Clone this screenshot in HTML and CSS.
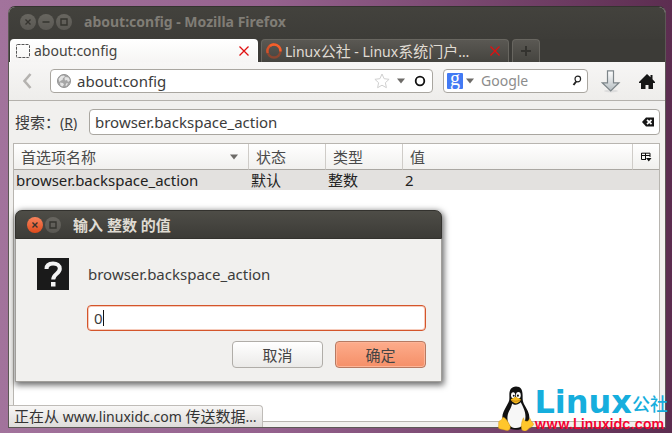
FILE: index.html
```html
<!DOCTYPE html>
<html lang="zh-CN">
<head>
<meta charset="utf-8">
<title>about:config - Mozilla Firefox</title>
<link rel="stylesheet" href="styles.css">
</head>
<body>
<div class="window">
  <header class="titlebar">
    <button class="orb" aria-label="关闭"><svg viewBox="0 0 16 16"><path d="M5.5 5.5l5 5M10.5 5.5l-5 5"/></svg></button>
    <button class="orb" aria-label="最小化"><svg viewBox="0 0 16 16"><path d="M4.5 8h7"/></svg></button>
    <button class="orb" aria-label="最大化"><svg viewBox="0 0 16 16"><path d="M5 5h6v6H5z"/></svg></button>
    <h1 class="title">about:config - Mozilla Firefox</h1>
  </header>
  <nav class="tabs">
    <div class="tab active">
      <svg class="favicon" viewBox="0 0 16 16"><rect x="1.5" y="1.5" width="13" height="13" rx="1" fill="none" stroke="#555" stroke-dasharray="3 1"/></svg>
      <span class="tab-label">about:config</span>
      <button class="close" aria-label="关闭标签页"><svg viewBox="0 0 12 12"><path d="M1.500 1.500l9 9M10.500 1.500l-9 9"/></svg></button>
    </div>
    <div class="tab">
      <svg class="favicon" viewBox="0 0 16 16" fill="none" stroke-width="2.400"><circle cx="8" cy="8" r="6.500" stroke="#8a4630"/><path d="M1.700 10A6.500 6.500 0 0 1 8 1.500" stroke="#d4532b"/><path d="M4 2.900A6.500 6.500 0 0 1 14.500 8.500" stroke="#f4602c"/></svg>
      <span class="tab-label">Linux<span class="cjk">公社</span> - Linux<span class="cjk">系统门户</span>…</span>
      <button class="close" aria-label="关闭标签页"><svg viewBox="0 0 12 12"><path d="M1.500 1.500l9 9M10.500 1.500l-9 9"/></svg></button>
    </div>
    <button class="tab new-tab" aria-label="新标签页"><svg viewBox="0 0 12 12"><path d="M6 1v10M1 6h10"/></svg></button>
  </nav>
  <div class="toolbar">
    <button class="back" aria-label="后退"><svg viewBox="0 0 10 16"><path d="M8.500 1L2.500 8l6 7" fill="none" stroke="#b5b3b0" stroke-width="2.600"/></svg></button>
    <div class="field address">
      <svg class="globe" viewBox="0 0 14 14"><circle cx="7" cy="7" r="6.500" fill="#a6a6a6" stroke="#929292"/><path d="M1.500 5L4 2l3-.5 1 1.500-2 1-.5 2L4 6.500 2.500 8zM8.500 3l3 .5 1.500 3-2 1.500-1-2-2 .5-.5-2zM3 8.500l3 .5 1 1.500-1.500 2-2-1zM9 9.500l2-.5-1 2.500-1.500.5z" fill="#e4e4e4"/></svg>
      <input class="text" aria-label="地址" value="about:config">
      <svg class="star" viewBox="0 0 16 16"><path d="M8 1l2.100 4.700 5 .6-3.700 3.400 1 5L8 12.200 3.600 14.700l1-5L.9 6.300l5-.6z" fill="#fff" stroke="#cfcfcf"/></svg>
      <svg class="drop" viewBox="0 0 8 6"><path d="M0 .500h8L4 5.500z"/></svg>
      <svg class="ring" viewBox="0 0 12 12"><circle cx="6" cy="6" r="4.300" fill="none" stroke="#111" stroke-width="1.800"/></svg>
    </div>
    <div class="field search">
      <span class="engine">g</span>
      <svg class="drop" viewBox="0 0 8 6"><path d="M0 .500h8L4 5.500z"/></svg>
      <input class="text" aria-label="搜索网页" placeholder="Google">
      <svg class="lens" viewBox="0 0 10 12"><circle cx="5.800" cy="4" r="2.800" fill="none" stroke="#222" stroke-width="1.200"/><path d="M4.200 6.500L1.500 10" stroke="#222" stroke-width="2"/></svg>
    </div>
    <button class="download" aria-label="下载"><svg viewBox="0 0 20 23"><defs><linearGradient id="steel" x2="0" y2="1"><stop stop-color="#fff"/><stop offset="1" stop-color="#b5bdc1"/></linearGradient></defs><ellipse cx="10" cy="21" rx="7" ry="1.500" fill="#ddd"/><path d="M6.500.8h6v12h5.500L9.700 21 1.200 12.800h5.300z" fill="url(#steel)" stroke="#7d8589" stroke-width="1.200"/></svg></button>
    <button class="home" aria-label="主页"><svg viewBox="0 0 16 15"><path d="M8 0l3.500 3.200V1h2v4.200L16 8v1h-2v6h-4.500v-4h-3v4H2V9H0V8z" fill="#161616"/></svg></button>
  </div>
  <main class="config">
    <div class="filter">
      <label for="filter"><span class="cjk">搜索：</span>(<u>R</u>)</label>
      <div class="field filter-box">
        <input class="text" id="filter" value="browser.backspace_action">
        <svg class="clear" viewBox="0 0 12 10"><path d="M0 5l4-4.500h8v9H4z" fill="#161616"/><path d="M5 2.800l4.500 4.400M9.500 2.800L5 7.200" stroke="#fff" stroke-width="1.700"/></svg>
      </div>
    </div>
    <div class="list">
      <table>
        <colgroup><col class="c-name"><col class="c-state"><col class="c-type"><col><col class="c-pick"></colgroup>
        <thead><tr>
          <th><div class="sort">首选项名称<svg class="drop" viewBox="0 0 8 6"><path d="M0 .500h8L4 5.500z"/></svg></div></th>
          <th>状态</th><th>类型</th><th>值</th>
          <th class="pick"><svg viewBox="0 0 11 10"><path d="M.5 1v6.500H5M.5 1.200H9V5M.5 3.500H9M4.500 1v6.500" fill="none" stroke="#111"/><path d="M5 6h5.500L7.800 9.500z" fill="#111"/></svg></th>
        </tr></thead>
        <tbody><tr><td>browser.backspace_action</td><td>默认</td><td>整数</td><td>2</td><td></td></tr></tbody>
      </table>
    </div>
  </main>
  <div class="status"><span class="cjk">正在从</span> www.linuxidc.com <span class="cjk">传送数据</span>…</div>
</div>

<section class="dialog" role="dialog" aria-labelledby="dialog-title">
  <header class="dialog-bar">
    <button class="orb hot" aria-label="关闭"><svg viewBox="0 0 16 16"><path d="M5.500 5.500l5 5M10.500 5.500l-5 5"/></svg></button>
    <button class="orb" aria-label="最大化"><svg viewBox="0 0 16 16"><path d="M5 5h6v6H5z"/></svg></button>
    <h2 class="title" id="dialog-title">输入 整数 的值</h2>
  </header>
  <div class="dialog-body">
    <svg class="question" viewBox="0 0 32 32"><path d="M0 0h32v32H0z" fill="#1a1a1a"/><path d="M9.500 11C9.500 7 12.500 5.500 16 5.500c4 0 6.800 1.800 6.800 5.300 0 5-6.600 5-6.600 10.700" fill="none" stroke="#f3f3f3" stroke-width="4"/><path d="M14 24h4.500v4.500H14z" fill="#f3f3f3"/></svg>
    <label class="prompt" for="value">browser.backspace_action</label>
    <div class="value-box"><input class="text" id="value" value="0"><i class="caret"></i></div>
    <div class="actions"><button class="btn">取消</button><button class="btn primary">确定</button></div>
  </div>
</section>

<aside class="brand">
  <svg class="tux" viewBox="0 0 38 44" preserveAspectRatio="none">
    <path d="M19 .5c-5 0-7 3.500-7 8 0 5 .5 6-3 11-3 5-5.500 9-4 14l5 7c5 3 13 3 18 0l5-7c1-6-2-10-5-15-2-3.500-2-5-2-9 0-6-2-9-7-9z" fill="#111"/>
    <path d="M15 17c2 2 6 2 9-1 2 4 5 8 5 14 0 7-4 11-10 11S9.500 37 10 30c.3-5 4-8 5-13z" fill="#f7f7f7"/>
    <ellipse cx="16" cy="9" rx="2.200" ry="3" fill="#fff"/><ellipse cx="21.500" cy="9" rx="2.500" ry="3.200" fill="#fff"/>
    <circle cx="16.600" cy="9.500" r="1" fill="#111"/><circle cx="21" cy="9.500" r="1.100" fill="#111"/>
    <path d="M13.500 13l5-2.500 5.500 2.500c0 2-3 4-5 4s-5-2-5.500-4z" fill="#f4b91e"/>
    <path d="M13.800 13.800c3 1.500 6 1.500 9.500 0" fill="none" stroke="#b9780c" stroke-width=".7"/>
    <path d="M5 30.500c3 0 6 5 8 9 0 4-3 4.500-6 3.500-3-1-7-.8-6.500-2.500.5-1.500 0-3.500.3-5.500.5-1.500 3-.5 4.200-4.500zM27 31c0 2 1.500 4 4 3.500 1.500-.3 2.500-3.500 3-2.500.5 3 3.500 3.800 3.500 5.500 0 2-4 3-6 5s-5.500 2-6.500-.5 0-8 2-11z" fill="#ffc62b" stroke="#d69a13" stroke-width=".5"/>
  </svg>
  <div class="brand-text">
    <div class="brand-name"><span class="big">Linux</span><span class="small">公社</span></div>
    <div class="brand-url">www.Linuxidc.com</div>
  </div>
</aside>
</body>
</html>
```
FILE: styles.css
```css
* { box-sizing: border-box; }

body {
  margin: 0;
  min-height: 100vh;
  padding: 6px 6px 5px 8px;
  display: flex;
  position: relative;
  overflow: hidden;
  color: #3c3c3c;
  font: 14px/20px "Noto Sans", "Noto Sans CJK SC", sans-serif;
  background: linear-gradient(90deg, #a2739c 0, #95628e 40%, #6b3a60 85%, #5c2d50 100%);
}

button, input { font: inherit; color: inherit; margin: 0; padding: 0; border: 0; background: none; }
button { display: flex; align-items: center; justify-content: center; }
svg { display: block; flex: none; }
input { outline: 0; min-width: 0; }
.cjk { font-size: 15px; }
.text { flex: 1; width: 100%; font-size: 15px; }
.text::placeholder { color: #8c8c8c; opacity: 1; }

.window {
  flex: 1;
  min-width: 0;
  display: flex;
  flex-direction: column;
  position: relative;
  background: #f1f0ee;
  border: 1px solid #5c5855;
  border-top-color: #34332f;
  border-radius: 7px 7px 0 0;
  overflow: hidden;
}

.titlebar { height: 32px; display: flex; align-items: center; gap: 2px; padding: 0 0 3px 11px; background: linear-gradient(#43423d, #3d3c38); color: #807d76; }
.title { margin: 0 0 0 10px; font-size: 14px; font-weight: 700; }
.orb { width: 16px; height: 16px; border-radius: 50%; background: linear-gradient(#686660, #5a5853); }
.orb svg { width: 16px; height: 16px; fill: none; stroke: #35342f; stroke-width: 1.4; }
.orb.hot { background: linear-gradient(#f6835d, #df4a1b); }

.tabs { height: 23px; display: flex; gap: 3px; padding-left: 1px; background: #3c3b37; }
.tab { flex: 0 1 248px; min-width: 0; display: flex; align-items: center; gap: 3px; padding: 0 7px 0 4px; border-radius: 4px 4px 0 0; background: linear-gradient(#5a5853, #45443f); border: 1px solid #686660; border-bottom: 0; color: #e0dcd4; }
.tab.active { background: linear-gradient(#fff, #f6f5f4); border-color: #fff; color: #45443f; }
.favicon { width: 16px; height: 16px; }
.tab-label { flex: 1; min-width: 0; white-space: nowrap; overflow: hidden; }
.close svg { width: 12px; height: 12px; stroke: #e01010; stroke-width: 1.3; }
.new-tab { flex: 0 0 28px; padding: 0; }
.new-tab svg { width: 12px; height: 12px; stroke: #34332f; stroke-width: 2; }

.toolbar { height: 39px; display: flex; align-items: center; padding: 0 10px 0 12px; background: linear-gradient(#f7f6f5, #eeedeb); border-bottom: 1px solid #b4b1ac; }
.field { display: flex; align-items: center; background: #fff; border: 1px solid #a9a6a0; border-radius: 4px; }
.back { width: 12px; }
.back svg { width: 10px; height: 16px; }
.address { flex: 1; height: 24px; margin: 0 10px 0 17px; padding: 0 6px; }
.globe { width: 14px; height: 14px; margin-right: 6px; }
.star { width: 16px; height: 16px; margin-right: 7px; }
.drop { width: 8px; height: 6px; fill: #6d6b68; }
.ring { width: 12px; height: 12px; margin-left: 9px; }
.search { width: 145px; height: 24px; padding: 0 5px 0 3px; }
.search .text { margin-left: 7px; font-size: 14px; }
.engine { width: 16px; height: 16px; margin-right: 3px; border-radius: 1px; background: #427af4; color: #fff; font: 20px/10px "Liberation Serif", serif; text-align: center; }
.lens { width: 10px; height: 12px; }
.download { margin-left: 13px; }
.download svg { width: 20px; height: 23px; }
.home { margin-left: 18px; }
.home svg { width: 16px; height: 15px; }

.config { flex: 1; display: flex; flex-direction: column; padding: 8px 5px 5px 4px; }
.filter { display: flex; align-items: center; }
.filter label { width: 76px; padding-left: 2px; white-space: nowrap; }
.filter-box { flex: 1; height: 26px; padding: 0 5px; }
.clear { width: 12px; height: 10px; }
.list { flex: 1; margin-top: 8px; background: #fff; border: 1px solid #b8b5b0; }

table { width: 100%; table-layout: fixed; border-collapse: separate; border-spacing: 0; font-size: 15px; }
.c-name { width: 235px; }
.c-state, .c-type { width: 77px; }
.c-pick { width: 26px; }
th { height: 26px; padding: 0 10px 0 7px; text-align: left; font-weight: 400; color: #4a4a4a; background: linear-gradient(#fff, #f1f0ee); border-bottom: 1px solid #aaa7a2; border-right: 1px solid #cfccc8; }
th:last-child { border-right: 0; }
.sort { display: flex; align-items: center; justify-content: space-between; }
th.pick { padding: 0 8px; }
.pick svg { width: 11px; height: 10px; }
td { height: 20px; padding: 0 2px; line-height: 20px; color: #222; background: #e3e1df; }

.status { position: absolute; left: 0; bottom: 0; height: 22px; padding: 0 5px; white-space: nowrap; color: #333; background: linear-gradient(#f8f7f6, #dedcda); border: 1px solid #bfbcb8; border-left: 0; border-bottom: 0; border-top-right-radius: 4px; }

.dialog { position: absolute; left: 15px; top: 210px; width: 427px; background: #f1f0ee; border: 1px solid #a09e9a; border-top: 0; border-radius: 7px 7px 0 0; box-shadow: 1px 2px 6px 1px rgba(0, 0, 0, .6); }
.dialog-bar { height: 29px; margin: 0 -1px; display: flex; align-items: center; gap: 2px; padding-left: 11px; border-radius: 7px 7px 0 0; background: linear-gradient(#4e4d47, #3c3b37); border: 1px solid #33322e; color: #dfdbd2; }
.dialog-bar .title { font-size: 15px; }
.dialog-body { display: grid; grid-template-columns: 32px 1fr; column-gap: 18px; padding: 19px 15px 13px 21px; }
.question { width: 32px; height: 32px; }
.prompt { align-self: center; padding-left: 1px; font-size: 15px; }
.value-box { grid-column: 2; display: flex; align-items: center; height: 26px; margin-top: 15px; padding-left: 6px; position: relative; background: #fff; border: 1px solid #d4552b; border-radius: 4px; box-shadow: inset 0 0 0 1px #f6cbbb; }
.caret { position: absolute; left: 15px; top: 4px; width: 1px; height: 16px; background: #111; }
.actions { grid-column: 1 / -1; display: flex; justify-content: flex-end; gap: 12px; margin-top: 10px; }
.btn { width: 91px; height: 27px; font-size: 15px; color: #444; border: 1px solid #b0ada8; border-radius: 4px; background: linear-gradient(#fff, #ebeae8); }
.btn.primary { border-color: #b77a62; background: linear-gradient(#fdac8b, #f58f68); box-shadow: inset 0 0 0 1px #fdb497; }

.brand { position: absolute; right: 4px; bottom: 2px; display: flex; align-items: flex-end; }
.tux { width: 36px; height: 45px; }
.brand-name { display: flex; align-items: flex-end; color: #16aedd; }
.big { font: 700 32px/30px "DejaVu Sans", sans-serif; }
.small { font-size: 18px; line-height: 26px; font-weight: 500; }
.brand-url { font: 600 14px/14px Inter, sans-serif; color: #f5002f; }
```
